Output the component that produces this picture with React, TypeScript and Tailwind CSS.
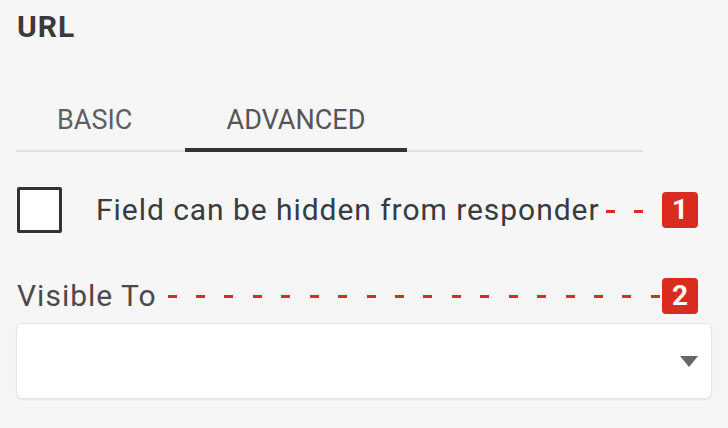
import React from "react";

const Badge = ({ n }: { n: string }) => (
  <div className="w-[36px] h-[36px] shrink-0 rounded-[4px] bg-[#d92b1f] flex items-center justify-center text-white font-bold text-[28px] leading-none">
    {n}
  </div>
);

const Dashes = ({ count, className }: { count: number; className: string }) => (
  <div className={`flex items-center ${className}`}>
    {Array.from({ length: count }).map((_, i) => (
      <span key={i} className="block w-[9px] h-[3px] bg-[#d92b1f]" />
    ))}
  </div>
);

export default function App() {
  return (
    <div className="w-[728px] h-[428px] bg-[#f6f6f6] px-4 pt-[9px] font-['Roboto',sans-serif] overflow-hidden">
      {/* Title */}
      <div className="text-[30px] leading-[36px] font-bold tracking-[1px] text-[#3a3a3a] pl-[1px]">URL</div>

      {/* Tabs */}
      <div className="mt-[55px] w-[627px] flex border-b-2 border-[#dedede]">
        <button className="w-[169px] h-[52px] -mb-[2px] border-b-4 border-transparent text-left pl-[41px] pb-[12px] text-[27px] leading-[40px] text-[#5f5f5f]">
          BASIC
        </button>
        <button className="w-[222px] h-[52px] -mb-[2px] border-b-4 border-[#333] text-center pb-[12px] text-[27px] leading-[40px] text-[#555]">
          ADVANCED
        </button>
      </div>

      {/* Hidden checkbox row */}
      <div className="mt-[35px] flex items-center h-[46px]">
        <div className="ml-[1px] w-[45px] h-[46px] border-[3px] border-[#333] rounded-[2px] bg-white shrink-0" />
        <span className="ml-[34px] text-[30px] leading-[46px] tracking-[0.95px] text-[#383b40] whitespace-nowrap">
          Field can be hidden from responder
        </span>
        <div className="flex-1 flex justify-end items-center pr-[19px] h-full">
          <Dashes count={2} className="gap-[19px] mt-[2px]" />
        </div>
        <Badge n="1" />
        <div className="w-[14px] shrink-0" />
      </div>

      {/* Visible To */}
      <div className="mt-[45px] flex items-center h-[36px]">
        <span className="pl-[1px] text-[30px] leading-[36px] tracking-[1px] text-[#4a4a4a] whitespace-nowrap">Visible To</span>
        <div className="flex-1 pl-[11px] pr-[2px]">
          <div className="flex justify-between items-center">
            {Array.from({ length: 18 }).map((_, i) => (
              <span key={i} className="block w-[9px] h-[3px] bg-[#d92b1f]" />
            ))}
          </div>
        </div>
        <Badge n="2" />
        <div className="w-[14px] shrink-0" />
      </div>

      {/* Select */}
      <div className="mt-[9px] h-[76px] w-[696px] bg-white border border-[#e4e4e4] rounded-[6px] shadow-[0_1px_2px_rgba(0,0,0,0.06)] flex items-center justify-end pr-[13px]">
        <svg width="18" height="11" viewBox="0 0 18 11" className="mt-[1px]">
          <path d="M0 0 H18 L9 11 Z" fill="#666" />
        </svg>
      </div>
    </div>
  );
}
